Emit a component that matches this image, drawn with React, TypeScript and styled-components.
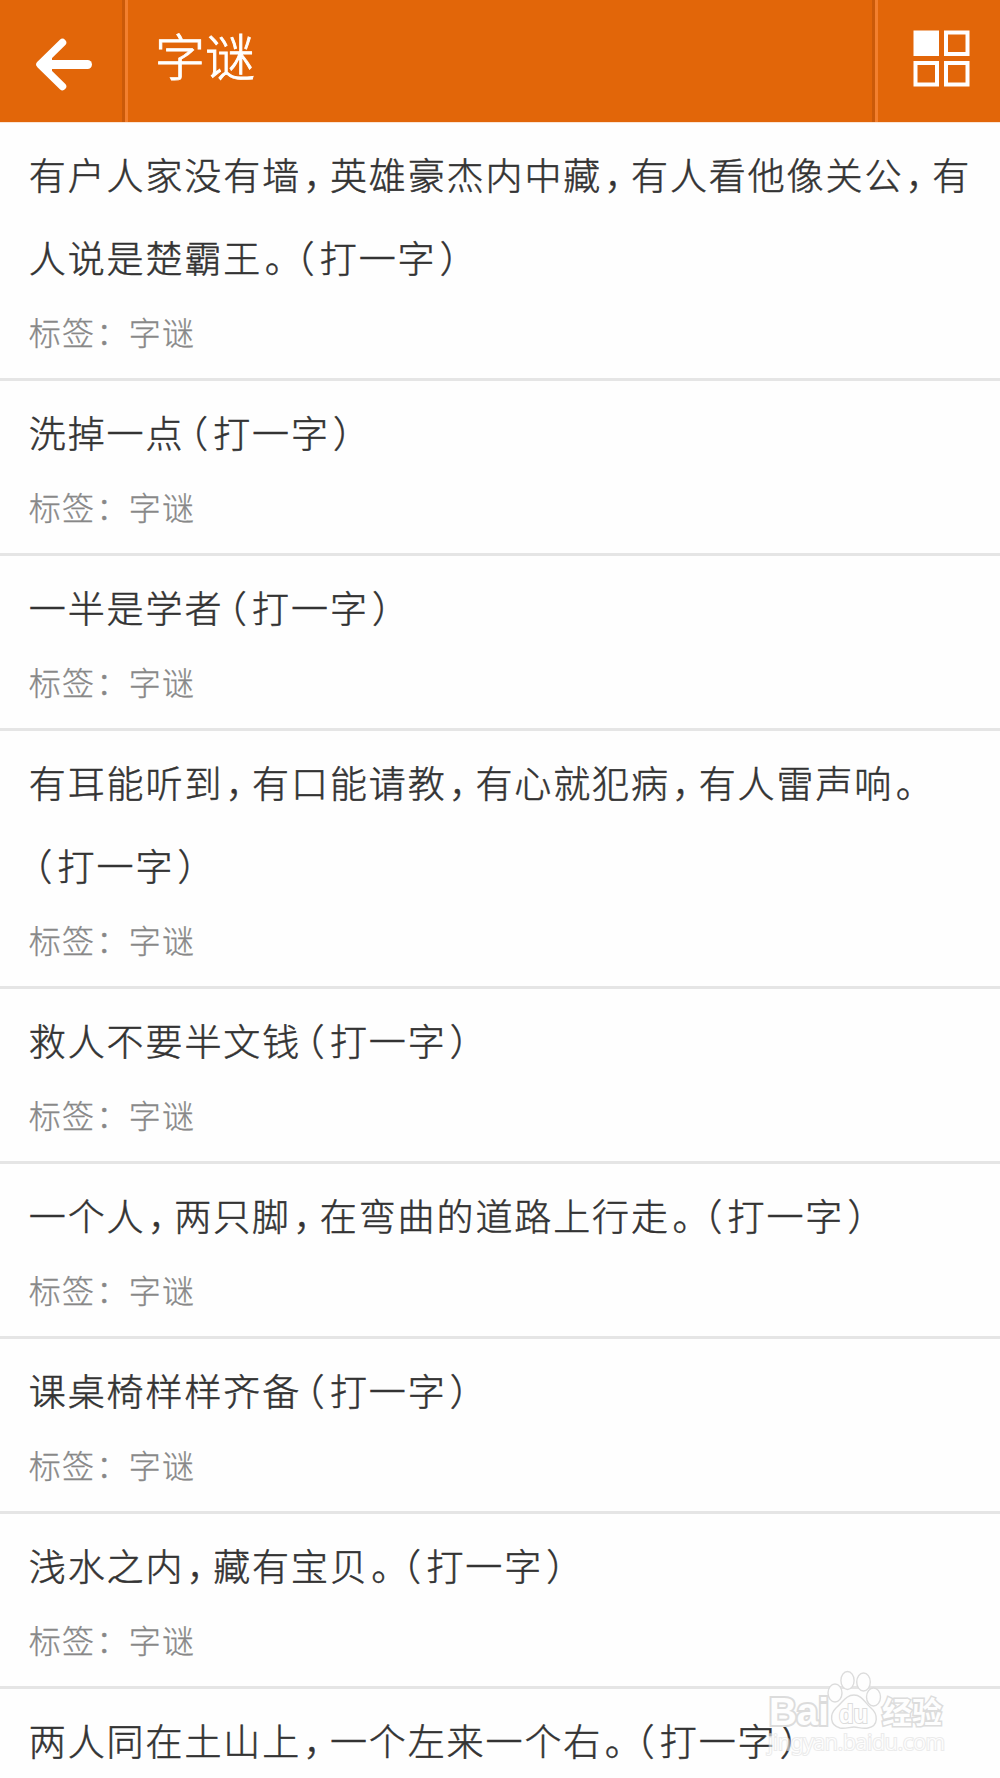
import React from "react";
import styled, { createGlobalStyle } from "styled-components";

const GlobalStyle = createGlobalStyle`
  html, body { margin: 0; padding: 0; background: #fefefe; overflow: hidden; }
  * { box-sizing: border-box; }
`;

const Page = styled.div`
  position: relative;
  width: 1000px;
  height: 1778px;
  overflow: hidden;
  background: #fefefe;
  font-family: "Noto Sans CJK SC", sans-serif;
  font-weight: 300;
  text-spacing-trim: space-all;
`;

const Header = styled.header`
  display: flex;
  height: 123px;
  background: #e26609;
  border-bottom: 1px solid #fae5d5;
  color: #fff;
`;

const BackButton = styled.div`
  flex: none;
  width: 122px;
  padding: 37px 0 0 34px;
`;

const Divider = styled.div`
  flex: none;
  width: 6px;
  background: linear-gradient(90deg, #cb5a09 0 50%, #f37f2e 50% 100%);
`;

const Title = styled.h1`
  flex: 1;
  margin: 0;
  padding-left: 27px;
  font-size: 50px;
  font-weight: 300;
  line-height: 108px;
  -webkit-text-stroke: 0.9px #fff;
`;

const MenuButton = styled.div`
  flex: none;
  width: 122px;
  padding: 30px 0 0 35px;
`;

const List = styled.ul`
  margin: 0;
  padding: 0;
  list-style: none;
`;

const Item = styled.li`
  padding: 10px 28px 15px 28.8px;
  border-bottom: 3px solid #e5e5e5;
`;

const Question = styled.div`
  color: #333;
  font-size: 37px;
  line-height: 83px;
  letter-spacing: 1.9px;
  white-space: nowrap;
  -webkit-text-stroke: 0.5px #333;
`;

const Mark = styled.span<{ $before: number; $after: number }>`
  margin-left: ${(p) => p.$before}px;
  margin-right: ${(p) => p.$after}px;
  font-feature-settings: "halt" 1;
`;

const Tag = styled.div`
  padding-top: 1px;
  color: #888;
  font-size: 32px;
  line-height: 63px;
  letter-spacing: 1.3px;
  -webkit-text-stroke: 0.3px #888;
`;

const Colon = styled.span`
  margin-left: 0.8px;
  margin-right: -0.8px;
`;

const Watermark = styled.svg`
  position: absolute;
  left: 760px;
  top: 1664px;
`;

const spacing: Record<string, [number, number]> = {
  "，": [2.4, 6],
  "。": [2.5, 5.9],
  "（": [5, 3.4],
  "）": [3.2, 5.2],
};

const riddles: string[][] = [
  ["有户人家没有墙，英雄豪杰内中藏，有人看他像关公，有", "人说是楚霸王。（打一字）"],
  ["洗掉一点（打一字）"],
  ["一半是学者（打一字）"],
  ["有耳能听到，有口能请教，有心就犯病，有人雷声响。", "（打一字）"],
  ["救人不要半文钱（打一字）"],
  ["一个人，两只脚，在弯曲的道路上行走。（打一字）"],
  ["课桌椅样样齐备（打一字）"],
  ["浅水之内，藏有宝贝。（打一字）"],
];

const lastRiddle = "两人同在土山上，一个左来一个右。（打一字）";

function Line({ text }: { text: string }) {
  return (
    <Question>
      {text.split(/([，。（）])/).map((part, i) => {
        const space = spacing[part];
        return space ? (
          <Mark key={i} $before={space[0]} $after={space[1]}>
            {part}
          </Mark>
        ) : (
          part
        );
      })}
    </Question>
  );
}

export default function App() {
  return (
    <Page lang="zh-CN">
      <GlobalStyle />
      <Header>
        <BackButton>
          <svg width="60" height="56" viewBox="0 0 60 56" fill="none" stroke="#fff" strokeLinecap="round" strokeLinejoin="round">
            <path d="M28.5 5.5 6 27.5 28.5 49.5" strokeWidth="7.5" />
            <path d="M8 27.5H53.5" strokeWidth="9" />
            <path d="M6 27.5 17 18V37Z" fill="#fff" strokeWidth="2" />
          </svg>
        </BackButton>
        <Divider />
        <Title>字谜</Title>
        <Divider />
        <MenuButton>
          <svg width="58" height="58" viewBox="0 0 58 58" fill="none" stroke="#fff" strokeWidth="4">
            <rect x="2.5" y="2.5" width="21.5" height="21.5" fill="#fff" />
            <rect x="33" y="2.5" width="21.5" height="21.5" />
            <rect x="2.5" y="33" width="21.5" height="21.5" />
            <rect x="33" y="33" width="21.5" height="21.5" />
          </svg>
        </MenuButton>
      </Header>
      <List>
        {riddles.map((lines) => (
          <Item key={lines[0]}>
            {lines.map((line) => (
              <Line key={line} text={line} />
            ))}
            <Tag>
              标签<Colon>：</Colon>字谜
            </Tag>
          </Item>
        ))}
        <Item>
          <Line text={lastRiddle} />
        </Item>
      </List>
      <Watermark width="196" height="100" viewBox="0 0 196 100" fill="#fefefe" stroke="#dcdcdc" strokeWidth="1.4">
        <g fontFamily="Liberation Sans, Noto Sans CJK SC, sans-serif" fontWeight="700">
          <text x="9" y="61" fontSize="39" textLength="60" lengthAdjust="spacingAndGlyphs" strokeWidth="4" paintOrder="stroke">Bai</text>
          <text x="122" y="59" fontSize="30" textLength="60" strokeWidth="3" paintOrder="stroke" fontFamily="Noto Sans CJK SC, sans-serif">经验</text>
        </g>
        <ellipse cx="75" cy="29" rx="7" ry="9" />
        <ellipse cx="87.5" cy="16.5" rx="6.6" ry="9" />
        <ellipse cx="103.5" cy="18" rx="6.8" ry="9" />
        <ellipse cx="113.5" cy="33" rx="7" ry="9" />
        <path d="M94 31C102 31 105 39 111 44C118 50 119 62 108 64C102 65 98 63 94 63C90 63 85 65 80 64C69 61 70 50 76 44C83 38 86 31 94 31Z" />
        <g fontFamily="Liberation Sans, sans-serif">
          <text x="79" y="59" fontSize="25" fontWeight="700" textLength="29" lengthAdjust="spacingAndGlyphs" strokeWidth="2" paintOrder="stroke">du</text>
          <text x="8" y="86" fontSize="21" textLength="177" lengthAdjust="spacingAndGlyphs" strokeWidth="2.2" paintOrder="stroke" fontFamily="Noto Sans, sans-serif" stroke="#e0e0e0" opacity="0.6">jingyan.baidu.com</text>
        </g>
      </Watermark>
    </Page>
  );
}
